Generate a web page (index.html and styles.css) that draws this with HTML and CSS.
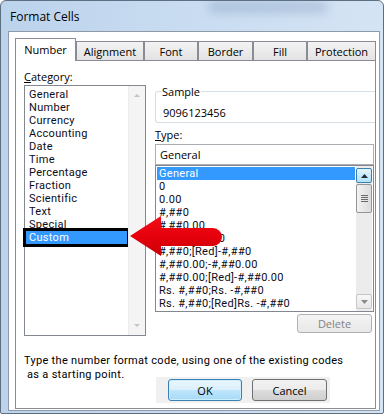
FILE: index.html
```html
<!DOCTYPE html>
<html>
<head>
<meta charset="utf-8">
<link rel="stylesheet" href="styles.css">
</head>
<body>
<div class="window">
  <div class="titlebar"><span class="blur"></span><span class="title">Format Cells</span></div>
  <div class="client">
    <div class="tabs">
      <div class="tab active w-number">Number</div>
      <div class="tab w-align">Alignment</div>
      <div class="tab w-font">Font</div>
      <div class="tab w-border">Border</div>
      <div class="tab w-fill">Fill</div>
      <div class="tab w-prot">Protection</div>
    </div>
    <div class="panel">
      <div class="cols">
        <div class="left">
          <div class="label"><u>C</u>ategory:</div>
          <div class="listbox cat">
            <div class="items">
              <div class="item">General</div>
              <div class="item">Number</div>
              <div class="item">Currency</div>
              <div class="item">Accounting</div>
              <div class="item">Date</div>
              <div class="item">Time</div>
              <div class="item">Percentage</div>
              <div class="item">Fraction</div>
              <div class="item">Scientific</div>
              <div class="item">Text</div>
              <div class="item">Special</div>
              <div class="item sel">Custom</div>
            </div>
            <div class="vscroll off">
              <span class="sarrow up"></span>
              <span class="sarrow down"></span>
            </div>
          </div>
        </div>
        <div class="right">
          <div class="group">
            <div class="legend">Sample</div>
            <div class="sample">9096123456</div>
          </div>
          <div class="label type-label"><u>T</u>ype:</div>
          <div class="input">General</div>
          <div class="listbox types">
            <div class="items">
              <div class="item hl">General</div>
              <div class="item">0</div>
              <div class="item">0.00</div>
              <div class="item">#,##0</div>
              <div class="item">#,##0.00</div>
              <div class="item">#,##0;-#,##0</div>
              <div class="item">#,##0;[Red]-#,##0</div>
              <div class="item">#,##0.00;-#,##0.00</div>
              <div class="item">#,##0.00;[Red]-#,##0.00</div>
              <div class="item">Rs. #,##0;Rs. -#,##0</div>
              <div class="item">Rs. #,##0;[Red]Rs. -#,##0</div>
            </div>
            <div class="vscroll on">
              <span class="sbtn upbtn"><svg width="7" height="4" viewBox="0 0 7 4"><path d="M0 4 L3.5 0 L7 4 Z" fill="#1b2d45"/></svg></span>
              <span class="thumb"><i></i><i></i><i></i><i></i></span>
              <span class="track"></span>
              <span class="sbtn downbtn"><svg width="7" height="4" viewBox="0 0 7 4"><path d="M0 0 L3.5 4 L7 0 Z" fill="#8a8a8a"/></svg></span>
            </div>
          </div>
          <div class="delete-row"><div class="btn disabled del">Delete</div></div>
        </div>
      </div>
      <div class="desc">Type the number format code, using one of the existing codes<br>&nbsp;as a starting point.</div>
      <div class="btnbar">
        <div class="btn ok">OK</div>
        <div class="btn cancel">Cancel</div>
      </div>
    </div>
  </div>
  <svg class="arrow" width="98" height="44" viewBox="0 0 98 44">
    <defs>
      <linearGradient id="rg" x1="0" y1="0" x2="0" y2="1">
        <stop offset="0" stop-color="#f0101a"/>
        <stop offset="0.5" stop-color="#e6000c"/>
        <stop offset="1" stop-color="#c80008"/>
      </linearGradient>
    </defs>
    <path d="M2 22 L33 2 L33 14 L85 14 A9 9 0 0 1 85 32 L33 32 L33 42 Z" fill="url(#rg)"/>
  </svg>
</div>
</body>
</html>
```

FILE: styles.css
```css
* { box-sizing: border-box; }
html, body { margin: 0; padding: 0; background: #ffffff; }
body {
  font-family: "Open Sans", "Noto Sans", sans-serif;
  font-size: 11px;
  color: #000;
  width: 388px;
  height: 416px;
  overflow: hidden;
}

.window {
  position: relative;
  width: 384px;
  height: 414px;
  border: 1px solid #5f6f82;
  border-radius: 6px 6px 2px 2px;
  background: linear-gradient(90deg, #bcd3ec 0%, #c9dcf1 50%, #d5e4f4 100%);
  padding: 0 3px 2px 7px;
  display: flex;
  flex-direction: column;
}

.titlebar {
  position: relative;
  height: 30px;
  display: flex;
  align-items: center;
  padding-left: 2px;
  overflow: hidden;
}
.blur {
  position: absolute;
  left: 200px;
  top: 0;
  width: 120px;
  height: 12px;
  border-radius: 8px;
  background: rgba(70, 100, 150, 0.22);
  filter: blur(5px);
}
.title {
  position: relative;
  font-size: 12px;
  color: #000;
}

.client {
  flex: 1;
  background: #fff;
  border: 1px solid #8e9aa8;
  padding: 6px 3px 1px 6px;
  display: flex;
  flex-direction: column;
}

.tabs {
  display: flex;
  align-items: flex-end;
  height: 22px;
}
.tab {
  height: 19px;
  border: 1px solid #898c95;
  border-bottom: none;
  background: linear-gradient(#f3f3f3, #e3e3e3);
  display: flex;
  align-items: center;
  justify-content: center;
  padding-top: 1px;
}
.tab.active {
  position: relative;
  z-index: 2;
  height: 23px;
  margin-bottom: -1px;
  background: #fff;
  padding-top: 0;
  padding-bottom: 2px;
}
.w-number { width: 61px; }
.w-align { width: 68px; }
.w-font { width: 54px; }
.w-border { width: 55px; }
.w-fill { width: 54px; }
.w-prot { width: 69px; }

.panel {
  height: 349px;
  border: 1px solid #898c95;
  background: #fff;
  display: flex;
  flex-direction: column;
}

.cols {
  display: flex;
  gap: 9px;
  padding-left: 8px;
}
.left {
  width: 122px;
  padding-top: 9px;
}
.label {
  height: 14px;
  line-height: 14px;
}
.listbox {
  border: 1px solid #828790;
  display: flex;
  background: #fff;
}
.cat {
  margin-top: 1px;
  height: 251px;
}
.items {
  flex: 1;
  padding: 2px 0 0 1px;
}
.item {
  height: 13px;
  line-height: 13px;
  padding-left: 3px;
  white-space: nowrap;
  color: #0c0c20;
  font-family: Roboto, "Open Sans", sans-serif;
  font-size: 11px;
  letter-spacing: 0.3px;
}
.cat .item.sel {
  background: #3399ff;
  color: #fff;
  margin-right: 1px;
  outline: 3px solid #000;
}

.vscroll {
  width: 17px;
  display: flex;
  flex-direction: column;
}
.vscroll.off {
  background: #f4f4f4;
  border-left: 1px solid #ececec;
  justify-content: space-between;
  align-items: center;
  padding: 8px 0 8px;
}
.sarrow {
  width: 0;
  height: 0;
  border-left: 3px solid transparent;
  border-right: 3px solid transparent;
}
.sarrow.up { border-bottom: 3px solid #c4c4c4; }
.sarrow.down { border-top: 3px solid #c4c4c4; }

.right {
  width: 220px;
}
.group {
  margin-top: 30px;
  height: 32px;
  border: 1px solid #d5dfe5;
  border-right: none;
  border-radius: 3px 0 0 3px;
  padding-left: 5px;
}
.legend {
  display: inline-block;
  margin-top: -7px;
  height: 14px;
  line-height: 14px;
  background: #fff;
  padding: 0 1px;
  vertical-align: top;
}
.sample {
  margin-top: -1px;
  padding-left: 2px;
  height: 14px;
  line-height: 14px;
}
.type-label {
  margin-top: 5px;
}
.input {
  margin-top: 2px;
  width: 219px;
  height: 21px;
  border: 1px solid #abadb3;
  line-height: 19px;
  padding-left: 4px;
}
.types {
  width: 219px;
  height: 147px;
}
.types .items {
  padding: 1px 0 0 1px;
}
.types .item {
  padding-left: 2px;
  margin-right: 1px;
}
.types .item.hl {
  background: #3399ff;
  color: #fff;
}
.vscroll.on {
  width: 16px;
  margin-right: 1px;
  padding-top: 2px;
  padding-bottom: 2px;
  background: #ececec;
}
.sbtn {
  height: 15px;
  border: 1px solid #a0a0a0;
  border-radius: 2px;
  display: flex;
  align-items: center;
  justify-content: center;
}
.upbtn {
  border-color: #3c7fb1;
  background: linear-gradient(#e3f4fc, #b2e1f8);
}
.downbtn {
  border-color: #c6c6c6;
  background: linear-gradient(#f7f7f7, #e7e7e7);
}
.thumb {
  margin-top: 1px;
  height: 29px;
  border: 1px solid #959595;
  border-radius: 2px;
  background: linear-gradient(90deg, #f2f2f2, #dcdcdc);
  display: flex;
  flex-direction: column;
  align-items: center;
  justify-content: center;
  gap: 1px;
}
.thumb i {
  display: block;
  width: 7px;
  height: 1px;
  background: #6a6a6a;
}
.track { flex: 1; }

.delete-row {
  display: flex;
  justify-content: flex-end;
  padding-right: 3px;
  margin-top: 2px;
}
.btn {
  display: flex;
  align-items: center;
  justify-content: center;
  border: 1px solid #707070;
  border-radius: 3px;
  background: linear-gradient(#f2f2f2 0%, #ebebeb 50%, #dddddd 51%, #cfcfcf 100%);
  font-size: 11px;
}
.del {
  width: 75px;
  height: 19px;
  border-color: #adb2b5;
  background: linear-gradient(#f4f4f4, #e8e8e8);
  color: #838383;
}

.desc {
  margin-top: 18px;
  padding-left: 8px;
  line-height: 14px;
  font-family: Roboto, "Open Sans", sans-serif;
  letter-spacing: 0.3px;
}
.btnbar {
  margin-top: -5px;
  margin-left: 140px;
  width: 174px;
  height: 26px;
  background: #f0f0f0;
  display: flex;
  gap: 10px;
  padding: 2px 0 0 12px;
}
.ok, .cancel {
  height: 22px;
}
.ok {
  width: 74px;
  border-color: #3c7fb1;
  background: linear-gradient(#eaf6fd 0%, #d9f0fc 50%, #bee6fd 51%, #a7d9f5 100%);
  box-shadow: inset 0 0 0 1px #ccefff;
}
.cancel { width: 75px; }

.arrow {
  position: absolute;
  left: 127px;
  top: 213px;
}
```
